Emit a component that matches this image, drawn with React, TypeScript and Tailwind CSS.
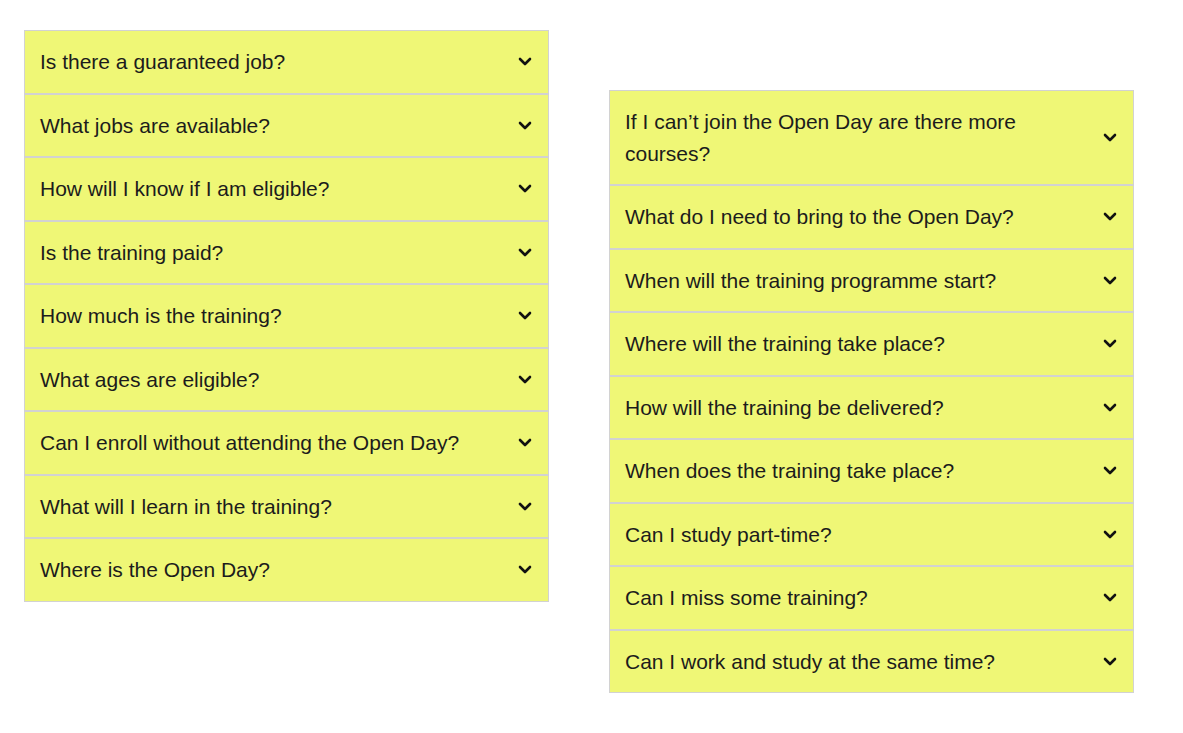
import React from "react";

const left = [
  "Is there a guaranteed job?",
  "What jobs are available?",
  "How will I know if I am eligible?",
  "Is the training paid?",
  "How much is the training?",
  "What ages are eligible?",
  "Can I enroll without attending the Open Day?",
  "What will I learn in the training?",
  "Where is the Open Day?",
];

const right = [
  "If I can\u2019t join the Open Day are there more courses?",
  "What do I need to bring to the Open Day?",
  "When will the training programme start?",
  "Where will the training take place?",
  "How will the training be delivered?",
  "When does the training take place?",
  "Can I study part-time?",
  "Can I miss some training?",
  "Can I work and study at the same time?",
];

function Chevron() {
  return (
    <svg width="14" height="9" viewBox="0 0 14 9" className="shrink-0">
      <polyline
        points="2,2 7,7 12,2"
        fill="none"
        stroke="#111"
        strokeWidth="2.6"
        strokeLinecap="round"
        strokeLinejoin="round"
      />
    </svg>
  );
}

function Item({ q }: { q: string }) {
  return (
    <div className="flex items-center justify-between border border-[#d2d2d2] bg-[#eff776] pl-[15px] pr-[16px] py-[15px]">
      <span className="text-[21px] leading-[31.5px] text-[#1c1c1c] pr-10">{q}</span>
      <Chevron />
    </div>
  );
}

export default function App() {
  return (
    <div
      className="flex items-start gap-[60px] pl-[24px] pt-[30px] min-h-[733px] bg-white"
      style={{ fontFamily: '"Liberation Sans", Arial, sans-serif' }}
    >
      <div className="flex w-[525px] flex-col">
        {left.map((q) => (
          <Item key={q} q={q} />
        ))}
      </div>
      <div className="mt-[60px] flex w-[525px] flex-col">
        {right.map((q) => (
          <Item key={q} q={q} />
        ))}
      </div>
    </div>
  );
}
